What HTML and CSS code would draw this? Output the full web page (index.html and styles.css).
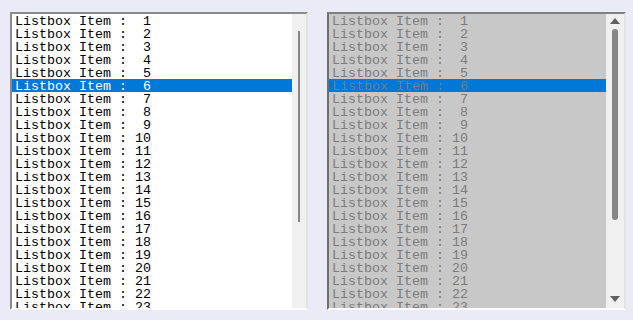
FILE: index.html
```html
<!DOCTYPE html>
<html lang="en">
<head>
    <meta charset="UTF-8">
    <title>Listbox</title>
    <link rel="stylesheet" href="styles.css">
</head>
<body>
    <div class="wrap">
        <div class="listbox">
            <ul class="items">
                <li>Listbox Item :  1</li>
                <li>Listbox Item :  2</li>
                <li>Listbox Item :  3</li>
                <li>Listbox Item :  4</li>
                <li>Listbox Item :  5</li>
                <li class="sel">Listbox Item :  6</li>
                <li>Listbox Item :  7</li>
                <li>Listbox Item :  8</li>
                <li>Listbox Item :  9</li>
                <li>Listbox Item : 10</li>
                <li>Listbox Item : 11</li>
                <li>Listbox Item : 12</li>
                <li>Listbox Item : 13</li>
                <li>Listbox Item : 14</li>
                <li>Listbox Item : 15</li>
                <li>Listbox Item : 16</li>
                <li>Listbox Item : 17</li>
                <li>Listbox Item : 18</li>
                <li>Listbox Item : 19</li>
                <li>Listbox Item : 20</li>
                <li>Listbox Item : 21</li>
                <li>Listbox Item : 22</li>
                <li>Listbox Item : 23</li>
            </ul>
            <div class="scroll thin">
                <div class="thumb"></div>
            </div>
        </div>
        <div class="listbox disabled">
            <ul class="items">
                <li>Listbox Item :  1</li>
                <li>Listbox Item :  2</li>
                <li>Listbox Item :  3</li>
                <li>Listbox Item :  4</li>
                <li>Listbox Item :  5</li>
                <li class="sel">Listbox Item :  6</li>
                <li>Listbox Item :  7</li>
                <li>Listbox Item :  8</li>
                <li>Listbox Item :  9</li>
                <li>Listbox Item : 10</li>
                <li>Listbox Item : 11</li>
                <li>Listbox Item : 12</li>
                <li>Listbox Item : 13</li>
                <li>Listbox Item : 14</li>
                <li>Listbox Item : 15</li>
                <li>Listbox Item : 16</li>
                <li>Listbox Item : 17</li>
                <li>Listbox Item : 18</li>
                <li>Listbox Item : 19</li>
                <li>Listbox Item : 20</li>
                <li>Listbox Item : 21</li>
                <li>Listbox Item : 22</li>
                <li>Listbox Item : 23</li>
            </ul>
            <div class="scroll wide">
                <div class="arrow up"></div>
                <div class="thumb"></div>
                <div class="arrow down"></div>
            </div>
        </div>
    </div>
</body>
</html>
```

FILE: styles.css
```css
*{margin:0; padding:0;}
html,body{
    width: 633px;
    height: 320px;
    overflow: hidden;
    background: #ebebf7;
}
.wrap{
    display: flex;
    gap: 19px;
    padding: 12px 0 0 10px;
}
.listbox{
    display: flex;
    width: 294px;
    height: 294px;
    background: #fff;
    border-top: 2px solid #8a8a8a;
    border-left: 2px solid #8a8a8a;
    border-right: 2px solid #e4e4e4;
    border-bottom: 2px solid #fff;
    overflow: hidden;
}
.listbox.disabled{
    width: 295px;
    background: #c8c8c8;
    border-top-color: #808080;
    border-left-color: #6e6e6e;
}
.items{
    flex: 1;
    list-style: none;
    overflow: hidden;
}
.items li{
    height: 13px;
    line-height: 13px;
    padding-left: 3px;
    padding-top: 1px;
    box-sizing: border-box;
    white-space: pre;
    font-family: "Liberation Mono", "Courier New", monospace;
    font-size: 13.33px;
    color: #000;
}
.items li.sel{
    background: #0078d7;
    color: #fff;
}
.disabled .items li{
    color: #7c7c7c;
}
.disabled .items li.sel{
    color: #7c7c7c;
}
.scroll{
    display: flex;
    flex-direction: column;
    align-items: center;
    width: 14px;
    background: #f0f0f0;
}
.scroll.thin .thumb{
    width: 2px;
    height: 191px;
    margin-top: 17px;
    background: #868686;
}
.scroll.wide{
    width: 18px;
}
.scroll.wide .thumb{
    width: 6px;
    height: 191px;
    margin-top: 5px;
    border-radius: 3px;
    background: #868686;
}
.arrow{
    width: 0;
    height: 0;
    border-left: 5px solid transparent;
    border-right: 5px solid transparent;
}
.arrow.up{
    margin-top: 4px;
    border-bottom: 6px solid #606060;
}
.arrow.down{
    margin-top: auto;
    margin-bottom: 6px;
    border-top: 6px solid #606060;
}
```
